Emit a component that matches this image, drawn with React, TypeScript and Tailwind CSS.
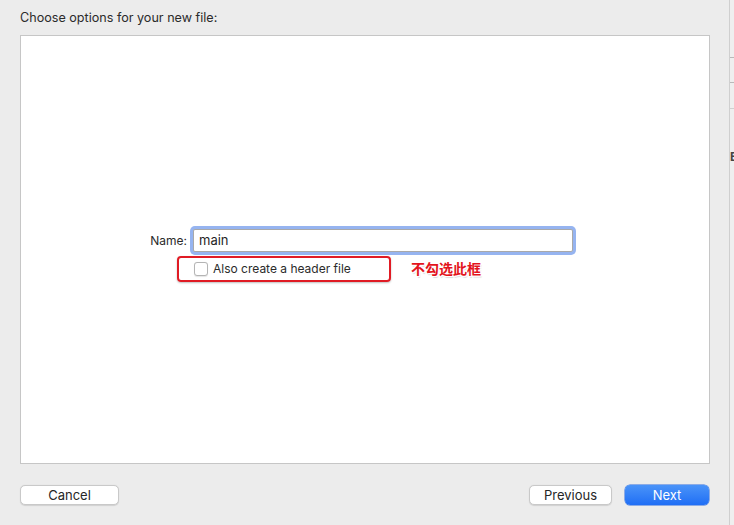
import React from "react";

const font = { fontFamily: "Inter, 'Noto Sans CJK SC', sans-serif" };

function MacButton({ label, primary, className }: { label: string; primary?: boolean; className: string }) {
  return (
    <button
      type="button"
      className={`flex h-[20px] items-center justify-center rounded-[5px] text-[13px] leading-none ${
        primary
          ? "bg-gradient-to-b from-[#4a93f8] to-[#1f6ef5] text-white shadow-[0_0_0_0.5px_#2a6be0]"
          : "border border-[#c9c9c9] bg-white text-[#262626] shadow-[0_0.5px_1px_rgba(0,0,0,0.12)]"
      } ${className}`}
    >
      {label}
    </button>
  );
}

export default function App() {
  return (
    <div className="flex h-[525px] w-[734px] overflow-hidden bg-[#ececec] text-[#262626]" style={font}>
      <div className="flex w-[729px] flex-col px-[20px]">
        <p className="pt-[10px] text-[12.6px] leading-[16px] text-[#2b2b2b]">Choose options for your new file:</p>

        <div className="relative mt-[9px] h-[429px] w-[690px] border border-[#c6c6c6] bg-white">
          <div className="flex items-center pt-[193px]">
            <span className="w-[166px] text-right text-[12px] text-[#2b2b2b]">Name:</span>
            <div className="ml-[6px] flex h-[23px] w-[380px] items-center rounded-[2px] border border-[#a9a9a9] bg-white pl-[5px] text-[13px] shadow-[0_0_0_3px_#96b4f0]">
              main
            </div>
          </div>
          <div className="mt-[8px] flex items-center pl-[173px]">
            <span className="h-[14px] w-[14px] rounded-[3px] border border-[#b4b4b4] bg-white shadow-[0_0.5px_1px_rgba(0,0,0,0.1)]" />
            <span className="ml-[5px] text-[12px] text-[#2b2b2b]">Also create a header file</span>
          </div>

          <div className="absolute left-[156px] top-[220px] h-[26px] w-[214px] rounded-[4px] border-2 border-[#e01b24] shadow-[0_1px_2px_rgba(0,0,0,0.25)]" />
          <span
            className="absolute left-[390px] top-[222px] text-[14px] font-bold text-[#e3141c]"
            style={{ textShadow: "0 0 1px #fff, 1px 1px 0 #fff, -1px -1px 0 #fff, 1px -1px 0 #fff, -1px 1px 0 #fff, 1px 2px 1px rgba(0,0,0,0.15)" }}
          >
            不勾选此框
          </span>
        </div>

        <div className="mt-[21px] flex items-center">
          <MacButton label="Cancel" className="w-[99px]" />
          <div className="flex-1" />
          <MacButton label="Previous" className="w-[83px]" />
          <MacButton label="Next" primary className="ml-[13px] w-[84px]" />
        </div>
      </div>

      <div className="relative flex-1 border-l border-[#cfcfcf] bg-[#efefef]">
        <div className="absolute left-0 top-[57px] h-px w-full bg-[#b9b9b9]" />
        <div className="absolute left-0 top-[82px] h-px w-full bg-[#b9b9b9]" />
        <div className="absolute left-0 top-[108px] h-px w-full bg-[#d0d0d0]" />
        <span className="absolute left-0 top-[151px] text-[12px] font-bold leading-none text-[#444]">E</span>
      </div>
    </div>
  );
}
